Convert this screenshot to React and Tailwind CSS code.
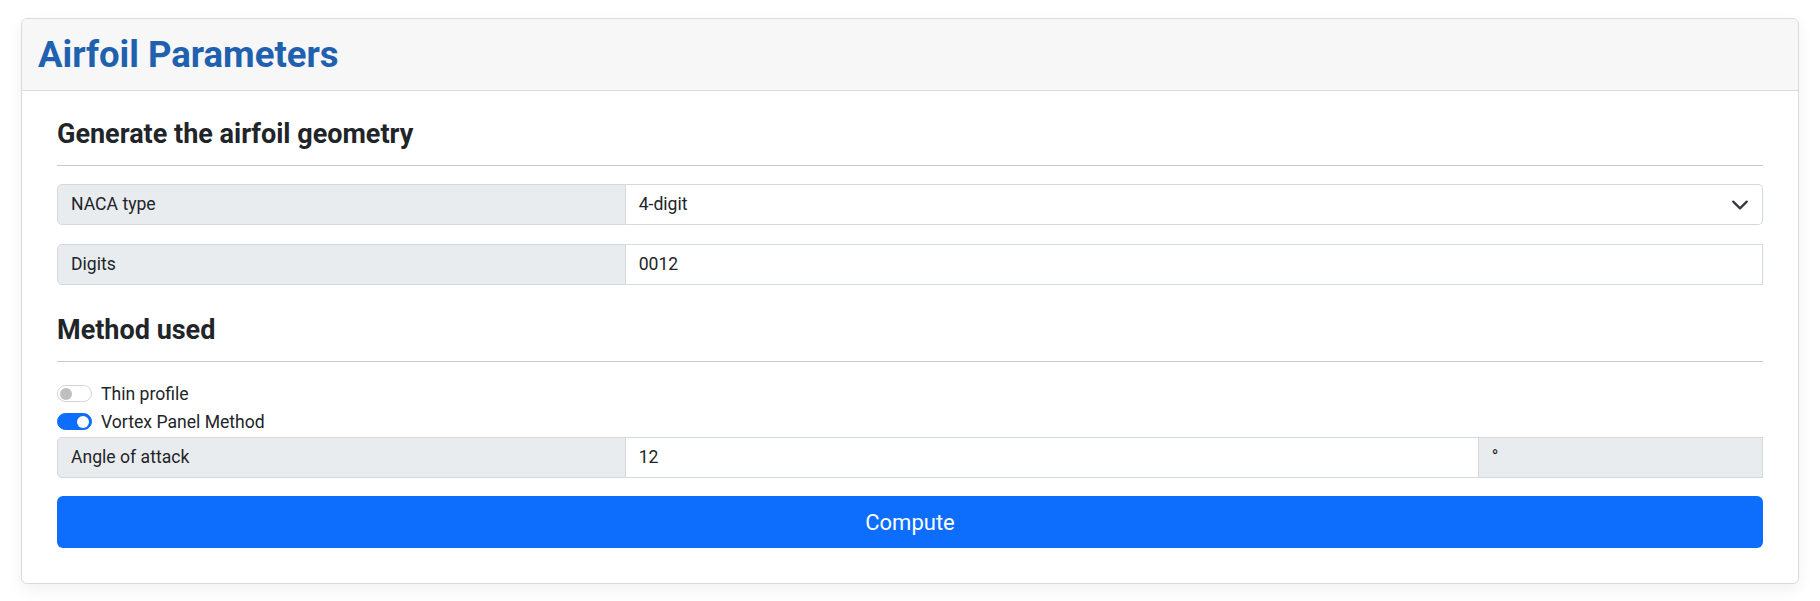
import { useState } from 'react'

function Toggle({ on, onClick, label }) {
  return (
    <label onClick={onClick} className="flex items-center gap-[9px] cursor-pointer select-none">
      <span
        className={`relative inline-block w-[35px] h-[17px] rounded-full border ${
          on ? 'bg-[#0d6efd] border-[#0d6efd]' : 'bg-white border-[#cfd3d7]'
        }`}
      >
        <span
          className={`absolute top-1/2 -translate-y-1/2 w-[12px] h-[12px] rounded-full ${
            on ? 'right-[2px] bg-white' : 'left-[2px] bg-[#bfbfbf]'
          }`}
        />
      </span>
      <span>{label}</span>
    </label>
  )
}

function Chevron() {
  return (
    <svg viewBox="0 0 16 16" className="absolute right-[13px] top-1/2 -translate-y-1/2 w-[18px] h-[18px]" fill="none">
      <path d="m2 5 6 6 6-6" stroke="#343a40" strokeWidth="2" strokeLinecap="round" strokeLinejoin="round" />
    </svg>
  )
}

export default function App() {
  const [method, setMethod] = useState('vortex')

  return (
    <div className="bg-white min-h-[601px] pt-[18px] px-[21px] font-[Roboto,sans-serif] text-[17.6px] text-[#212529]">
      <div className="border border-[#dadada] rounded-[6px] shadow-[0_6px_16px_rgba(0,0,0,0.06)] bg-white overflow-hidden">
        {/* header */}
        <div className="h-[72px] bg-[#f7f7f7] border-b border-[#dadada] px-[16px] pt-[15px]">
          <h2 className="text-[36.5px] leading-[42px] font-bold text-[#1f61af]">Airfoil Parameters</h2>
        </div>

        <div className="px-[35px] pt-[27px] pb-[35px]">
          <h4 className="text-[27px] leading-[32px] font-bold">Generate the airfoil geometry</h4>
          <hr className="mt-[15px] border-0 border-t border-[#c9cacb]" />

          <div className="flex h-[41px] mt-[18px]">
            <div className="w-1/3 flex items-center px-[13px] bg-[#e9ecef] border border-[#d4d9de] rounded-l-[5px]">
              NACA type
            </div>
            <div className="flex-1 relative flex items-center px-[13px] border-y border-r border-[#d4d9de] rounded-r-[5px]">
              4-digit
              <Chevron />
            </div>
          </div>

          <div className="flex h-[41px] mt-[19px]">
            <div className="w-1/3 flex items-center px-[13px] bg-[#e9ecef] border border-[#d4d9de] rounded-l-[5px]">
              Digits
            </div>
            <div className="flex-1 flex items-center px-[13px] border-y border-r border-[#d4d9de]">0012</div>
          </div>

          <h4 className="text-[27px] leading-[32px] font-bold mt-[29px]">Method used</h4>
          <hr className="mt-[15px] border-0 border-t border-[#c9cacb]" />

          <div className="mt-[18px] h-[28px] flex items-center">
            <Toggle on={method === 'thin'} onClick={() => setMethod('thin')} label="Thin profile" />
          </div>
          <div className="h-[28px] flex items-center">
            <Toggle on={method === 'vortex'} onClick={() => setMethod('vortex')} label="Vortex Panel Method" />
          </div>

          <div className="flex h-[41px] mt-[1px]">
            <div className="w-1/3 flex items-center px-[13px] bg-[#e9ecef] border border-[#d4d9de] rounded-l-[5px]">
              Angle of attack
            </div>
            <div className="w-1/2 flex items-center px-[13px] border-y border-r border-[#d4d9de]">12</div>
            <div className="flex-1 flex items-center px-[13px] bg-[#e9ecef] border-y border-r border-[#d4d9de]">°</div>
          </div>

          <button className="mt-[18px] w-full h-[52px] rounded-[6px] bg-[#0d6efd] text-white text-[22px]">
            Compute
          </button>
        </div>
      </div>
    </div>
  )
}
